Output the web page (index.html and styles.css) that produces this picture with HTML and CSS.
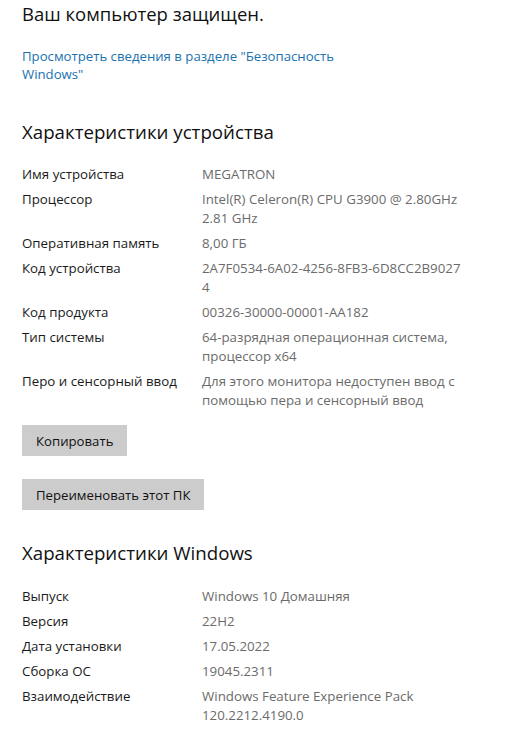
FILE: index.html
```html
<!DOCTYPE html>
<html lang="ru">
<head>
<meta charset="utf-8">
<link rel="stylesheet" href="styles.css">
</head>
<body>
<main class="page">
  <h1 class="title">Ваш компьютер защищен.</h1>
  <a class="link" href="#">Просмотреть сведения в разделе "Безопасность<br>Windows"</a>

  <h2 class="heading heading-device">Характеристики устройства</h2>
  <div class="specs specs-device">
    <div class="label">Имя устройства</div><div class="value">MEGATRON</div>
    <div class="label">Процессор</div><div class="value">Intel(R) Celeron(R) CPU G3900 @ 2.80GHz<br>2.81 GHz</div>
    <div class="label">Оперативная память</div><div class="value">8,00 ГБ</div>
    <div class="label">Код устройства</div><div class="value">2A7F0534-6A02-4256-8FB3-6D8CC2B9027<br>4</div>
    <div class="label">Код продукта</div><div class="value">00326-30000-00001-AA182</div>
    <div class="label">Тип системы</div><div class="value">64-разрядная операционная система,<br>процессор x64</div>
    <div class="label">Перо и сенсорный ввод</div><div class="value">Для этого монитора недоступен ввод с<br>помощью пера и сенсорный ввод</div>
  </div>

  <div class="buttons">
    <button class="btn">Копировать</button>
    <button class="btn">Переименовать этот ПК</button>
  </div>

  <h2 class="heading heading-windows">Характеристики Windows</h2>
  <div class="specs specs-windows">
    <div class="label">Выпуск</div><div class="value">Windows 10 Домашняя</div>
    <div class="label">Версия</div><div class="value">22H2</div>
    <div class="label">Дата установки</div><div class="value">17.05.2022</div>
    <div class="label">Сборка ОС</div><div class="value">19045.2311</div>
    <div class="label">Взаимодействие</div><div class="value">Windows Feature Experience Pack<br>120.2212.4190.0</div>
  </div>
</main>
</body>
</html>
```
FILE: styles.css
```css
html, body {
  margin: 0;
  padding: 0;
  background: #ffffff;
}

body {
  font-family: "Open Sans", "Noto Sans", sans-serif;
  color: #000000;
  overflow: hidden;
}

.page {
  padding-left: 22px;
  display: flex;
  flex-direction: column;
  align-items: flex-start;
}

.title {
  margin: 0;
  font-size: 18.5px;
  font-weight: 400;
  line-height: 28px;
  color: #111111;
}

.link {
  margin-top: 19px;
  font-size: 13.2px;
  line-height: 18px;
  color: #1a72b0;
  text-decoration: none;
}

.heading {
  margin: 0;
  font-size: 18.7px;
  font-weight: 400;
  line-height: 28px;
  color: #111111;
}

.heading-device {
  margin-top: 35px;
}

.heading-windows {
  margin-top: 29px;
}

.specs {
  display: grid;
  grid-template-columns: 180px auto;
  row-gap: 6px;
  font-size: 13.3px;
  line-height: 19px;
}

.specs-device {
  margin-top: 18.5px;
}

.specs-windows {
  margin-top: 19.5px;
}

.label {
  color: #1a1a1a;
}

.value {
  color: #6b6b6b;
}

.buttons {
  margin-top: 15.5px;
  display: flex;
  flex-direction: column;
  align-items: flex-start;
  gap: 23px;
}

.btn {
  font-family: inherit;
  font-size: 13.2px;
  color: #111111;
  background: #cccccc;
  border: none;
  height: 31px;
  padding: 0 14px;
  margin: 0;
}
```
